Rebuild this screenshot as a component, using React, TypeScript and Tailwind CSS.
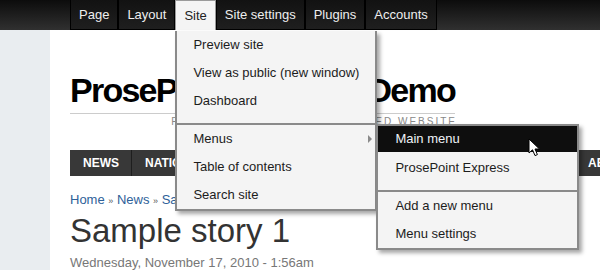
import React from "react";

const tabs = ["Page", "Layout", "Site", "Site settings", "Plugins", "Accounts"];

function Tab({ label }: { label: string }) {
  if (label === "Site") {
    return (
      <div className="relative h-[30px] flex items-center px-2 border-x border-t border-[#9a9a9a] bg-[#f4f4f4] text-[#222] z-20">
        {label}
        <SiteMenu />
      </div>
    );
  }
  return (
    <div className="h-[30px] flex items-center px-2 border-x border-b border-black bg-[linear-gradient(#121212,#1f1f1f)] text-[#eeeeee]">
      {label}
    </div>
  );
}

function Item({ children, extra }: { children: React.ReactNode; extra?: React.ReactNode }) {
  return (
    <div className="h-[28px] flex items-center pl-[16px] text-[#1c1c1c] whitespace-nowrap">
      {children}
      {extra}
    </div>
  );
}

function SiteMenu() {
  return (
    <div className="absolute left-[-1px] top-[30px] w-[202px] bg-[#f4f4f4] border-x-2 border-b-2 border-[#8a8a8a] shadow-[3px_3px_4px_rgba(0,0,0,0.35)] text-[13px]">
      <div className="pb-[8px]">
        <Item>Preview site</Item>
        <Item>View as public (new window)</Item>
        <Item>Dashboard</Item>
      </div>
      <div className="border-t-2 border-[#8a8a8a]">
        <Item
          extra={
            <span className="ml-auto mr-[3px] w-0 h-0 border-l-[4px] border-y-[4px] border-y-transparent border-l-[#8a8a8a]" />
          }
        >
          Menus
        </Item>
        <Item>Table of contents</Item>
        <Item>Search site</Item>
      </div>
      <SubMenu />
    </div>
  );
}

function SubMenu() {
  return (
    <div className="absolute left-[199px] top-[93px] w-[203px] bg-[#f4f4f4] border-2 border-[#8a8a8a] shadow-[3px_3px_4px_rgba(0,0,0,0.35)] text-[13px]">
      <div className="pb-[8px]">
        <div className="h-[26px] mb-[2px] flex items-center pl-[17px] bg-[#0e0e0e] text-[#eef2f8] whitespace-nowrap">
          Main menu
        </div>
        <div className="h-[28px] flex items-center pl-[17px] text-[#1c1c1c] whitespace-nowrap">
          ProsePoint Express
        </div>
      </div>
      <div className="border-t-2 border-[#8a8a8a]">
        <div className="h-[28px] flex items-center pl-[17px] text-[#1c1c1c] whitespace-nowrap">
          Add a new menu
        </div>
        <div className="h-[28px] flex items-center pl-[17px] text-[#1c1c1c] whitespace-nowrap">
          Menu settings
        </div>
      </div>
    </div>
  );
}

const navItems = [
  { label: "NEWS", w: "w-[62px]" },
  { label: "NATION", w: "w-[72px]" },
  { label: "WORLD", w: "w-[72px]" },
  { label: "BUSINESS", w: "w-[88px]" },
  { label: "SPORTS", w: "w-[76px]" },
  { label: "ENTERTAINMENT", w: "w-[135px]" },
  { label: "ABOUT", w: "w-[70px]" },
];

export default function App() {
  return (
    <div className="relative w-[600px] h-[270px] overflow-hidden bg-white font-['Liberation_Sans',Arial,sans-serif]">
      <div className="h-[30px] flex pl-[70px] bg-[linear-gradient(#0c0c0c,#303030)] text-[13px]">
        {tabs.map((t) => (
          <Tab key={t} label={t} />
        ))}
      </div>
      <div className="flex h-[240px]">
        <div className="w-[50px] bg-[#e9edf0]" />
        <div className="flex-1 pl-[20px] pt-[40px] overflow-hidden">
          <div className="w-[385px] text-[34px] leading-[40px] font-bold tracking-[-1.75px] text-black pb-[3px] border-b border-[#cccccc] whitespace-nowrap">
            ProsePoint Express Demo
          </div>
          <div className="w-[387px] mt-[2px] text-[10px] leading-[12px] tracking-[2px] text-[#888] text-right whitespace-nowrap">
            PROSEPOINT EXPRESS POWERED WEBSITE
          </div>
          <div className="mt-[22px] h-[26px] flex bg-[#383838] w-[600px]">
            {navItems.map((n) => (
              <div
                key={n.label}
                className={`${n.w} shrink-0 flex items-center px-[13px] border-r border-[#1e1e1e] text-[12px] font-bold text-white whitespace-nowrap`}
              >
                {n.label}
              </div>
            ))}
          </div>
          <div className="mt-[16px] text-[13px] leading-[16px] text-[#2e6199] whitespace-nowrap">
            Home <span className="text-[9px] text-[#555]">»</span> News{" "}
            <span className="text-[9px] text-[#555]">»</span> Sample story 1
          </div>
          <div className="mt-[3px] text-[33px] leading-[38px] text-[#333] whitespace-nowrap">
            Sample story 1
          </div>
          <div className="mt-[5px] text-[13px] leading-[16px] text-[#777] whitespace-nowrap">
            Wednesday, November 17, 2010 - 1:56am
          </div>
        </div>
      </div>
      <svg
        width="14"
        height="20"
        viewBox="0 0 14 20"
        className="absolute left-[528px] top-[138px] z-50"
      >
        <path
          d="M1 1 L1 15 L4.5 11.8 L7 17.6 L9.4 16.6 L7 11 L11.5 11 Z"
          fill="white"
          stroke="black"
          strokeWidth="1"
          strokeLinejoin="miter"
        />
      </svg>
    </div>
  );
}
